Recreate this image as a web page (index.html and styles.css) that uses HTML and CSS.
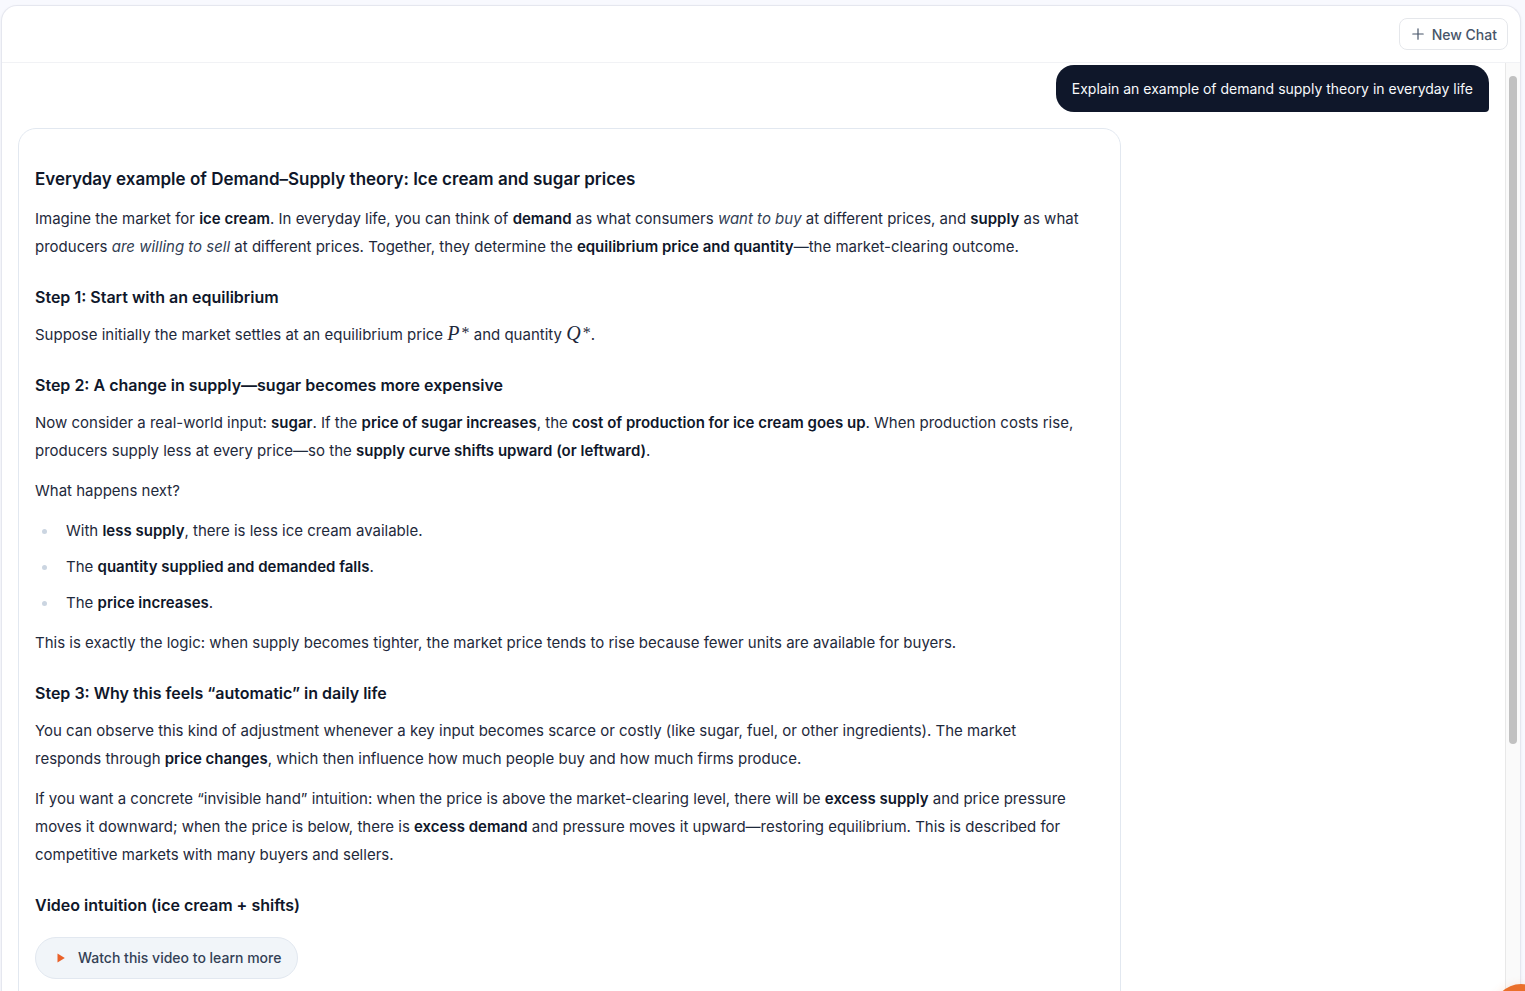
FILE: index.html
```html
<!DOCTYPE html>
<html lang="en">

<head>
    <meta charset="UTF-8">
    <meta name="viewport" content="width=device-width, initial-scale=1.0">
    <title>Chat</title>
    <link rel="stylesheet" href="styles.css">
</head>

<body>
    <main class="chat-shell">
        <header class="chat-header">
            <button type="button" class="new-chat-btn">
                <svg width="12" height="12" viewBox="0 0 12 12" fill="none" stroke="currentColor" stroke-width="1.2" stroke-linecap="round" aria-hidden="true">
                    <path d="M6 0.8v10.4M0.8 6h10.4" />
                </svg>
                New Chat
            </button>
        </header>

        <div class="chat-body">
            <div class="messages">
                <div class="message-user">Explain an example of demand supply theory in everyday life</div>

                <article class="message-bot">
                    <h3>Everyday example of Demand–Supply theory: Ice cream and sugar prices</h3>
                    <p>Imagine the market for <strong>ice cream</strong>. In everyday life, you can think of <strong>demand</strong> as what consumers <em>want to buy</em> at different prices, and <strong>supply</strong> as what<br>
                        producers <em>are willing to sell</em> at different prices. Together, they determine the <strong>equilibrium price and quantity</strong>—the market-clearing outcome.</p>

                    <h4>Step 1: Start with an equilibrium</h4>
                    <p>Suppose initially the market settles at an equilibrium price <span class="math"><i>P</i><sup>*</sup></span> and quantity <span class="math"><i>Q</i><sup>*</sup></span>.</p>

                    <h4>Step 2: A change in supply—sugar becomes more expensive</h4>
                    <p>Now consider a real-world input: <strong>sugar</strong>. If the <strong>price of sugar increases</strong>, the <strong>cost of production for ice cream goes up</strong>. When production costs rise,<br>
                        producers supply less at every price—so the <strong>supply curve shifts upward (or leftward)</strong>.</p>
                    <p>What happens next?</p>
                    <ul>
                        <li>With <strong>less supply</strong>, there is less ice cream available.</li>
                        <li>The <strong>quantity supplied and demanded falls</strong>.</li>
                        <li>The <strong>price increases</strong>.</li>
                    </ul>
                    <p>This is exactly the logic: when supply becomes tighter, the market price tends to rise because fewer units are available for buyers.</p>

                    <h4>Step 3: Why this feels “automatic” in daily life</h4>
                    <p>You can observe this kind of adjustment whenever a key input becomes scarce or costly (like sugar, fuel, or other ingredients). The market<br>
                        responds through <strong>price changes</strong>, which then influence how much people buy and how much firms produce.</p>
                    <p>If you want a concrete “invisible hand” intuition: when the price is above the market-clearing level, there will be <strong>excess supply</strong> and price pressure<br>
                        moves it downward; when the price is below, there is <strong>excess demand</strong> and pressure moves it upward—restoring equilibrium. This is described for<br>
                        competitive markets with many buyers and sellers.</p>

                    <h4>Video intuition (ice cream + shifts)</h4>
                    <a class="video-link" href="#video">
                        <svg width="8" height="10" viewBox="0 0 8 10" aria-hidden="true">
                            <path d="M0.5 0.5L7.8 5L0.5 9.5z" fill="#ea6129" />
                        </svg>
                        Watch this video to learn more
                    </a>
                </article>
            </div>

            <div class="scroll-track">
                <div class="scroll-thumb"></div>
            </div>
        </div>
    </main>

    <button type="button" class="help-btn" aria-label="Help"></button>
</body>

</html>
```

FILE: styles.css
```css
* {
    box-sizing: border-box;
}

body {
    margin: 0;
    height: 100vh;
    overflow: hidden;
    background-color: #f8f9fe;
    font-family: Inter, "Liberation Sans", sans-serif;
    font-size: 15px;
    color: #1e293b;
}

.chat-shell {
    display: flex;
    flex-direction: column;
    height: 100vh;
    margin: 5px 4px 0 1px;
    background-color: white;
    border: 1px solid #e5e7ef;
    border-bottom: none;
    border-radius: 16px 16px 0 0;
    box-shadow: 0 1px 3px rgba(15, 23, 42, 0.06);
    overflow: hidden;
}

.chat-header {
    display: flex;
    flex-shrink: 0;
    align-items: center;
    justify-content: flex-end;
    height: 57px;
    padding: 0 12px;
    border-bottom: 1px solid #f1f2f5;
}

.new-chat-btn {
    display: flex;
    align-items: center;
    gap: 8px;
    height: 32px;
    padding: 0 10px 0 12px;
    background-color: white;
    border: 1px solid #e5e7eb;
    border-radius: 8px;
    color: #475569;
    font-family: inherit;
    font-size: 14px;
    font-weight: 500;
    cursor: pointer;
}

/* conversation */
.chat-body {
    display: flex;
    flex: 1;
    min-height: 0;
}

.messages {
    display: flex;
    flex: 1;
    flex-direction: column;
    gap: 16px;
    padding: 2px 16px 0;
    overflow: hidden;
}

.message-user {
    flex-shrink: 0;
    align-self: flex-end;
    padding: 12px 16px;
    border-radius: 18px 18px 4px 18px;
    background-color: #0f172a;
    color: #f8fafc;
    font-size: 14px;
    line-height: 23px;
}

.message-bot {
    flex-shrink: 0;
    width: 75%;
    padding: 16px 16px 40px;
    border: 1px solid #e2e8f0;
    border-radius: 18px;
    line-height: 28px;
}

.message-bot h3 {
    margin: 20px 0 12px;
    font-size: 17px;
    font-weight: 600;
    line-height: 28px;
    color: #0f172a;
}

.message-bot h4 {
    margin: 24px 0 12px;
    font-size: 16px;
    font-weight: 600;
    line-height: 24px;
    color: #0f172a;
}

.message-bot p {
    margin: 0 0 12px;
}

.message-bot strong {
    font-weight: 600;
    color: #0f172a;
}

.message-bot em {
    color: #334155;
}

.message-bot ul {
    display: flex;
    flex-direction: column;
    gap: 8px;
    margin: 0 0 12px;
    padding: 0;
    list-style: none;
}

.message-bot li::before {
    content: "";
    display: inline-block;
    width: 5px;
    height: 5px;
    margin: 0 19px 0 7px;
    border-radius: 50%;
    background-color: #cbd5e1;
    vertical-align: middle;
}

.math {
    font-family: "Liberation Serif", serif;
    font-size: 20px;
    line-height: 1;
}

.math sup {
    margin-left: 2px;
    font-size: 16px;
    line-height: 0;
    vertical-align: 2px;
}

.video-link {
    display: inline-flex;
    align-items: center;
    gap: 13px;
    height: 42px;
    margin-top: 8px;
    padding: 0 16px 0 21px;
    border: 1px solid #e2e8f0;
    border-radius: 21px;
    background-color: #f1f5f9;
    color: #334155;
    font-size: 14px;
    font-weight: 500;
    text-decoration: none;
}

/* scrollbar */
.scroll-track {
    width: 15px;
    padding: 13px 3px 0;
    border-left: 1px solid #e8e8e8;
    background-color: #fafafa;
}

.scroll-thumb {
    width: 8px;
    height: calc(100% - 252px);
    border-radius: 4px;
    background-color: #c1c1c1;
}

.help-btn {
    position: fixed;
    right: -24px;
    bottom: -49px;
    width: 56px;
    height: 56px;
    border: none;
    border-radius: 50%;
    background-color: #ea6f2a;
    box-shadow: 0 4px 12px rgba(234, 111, 42, 0.3);
    cursor: pointer;
}
```
